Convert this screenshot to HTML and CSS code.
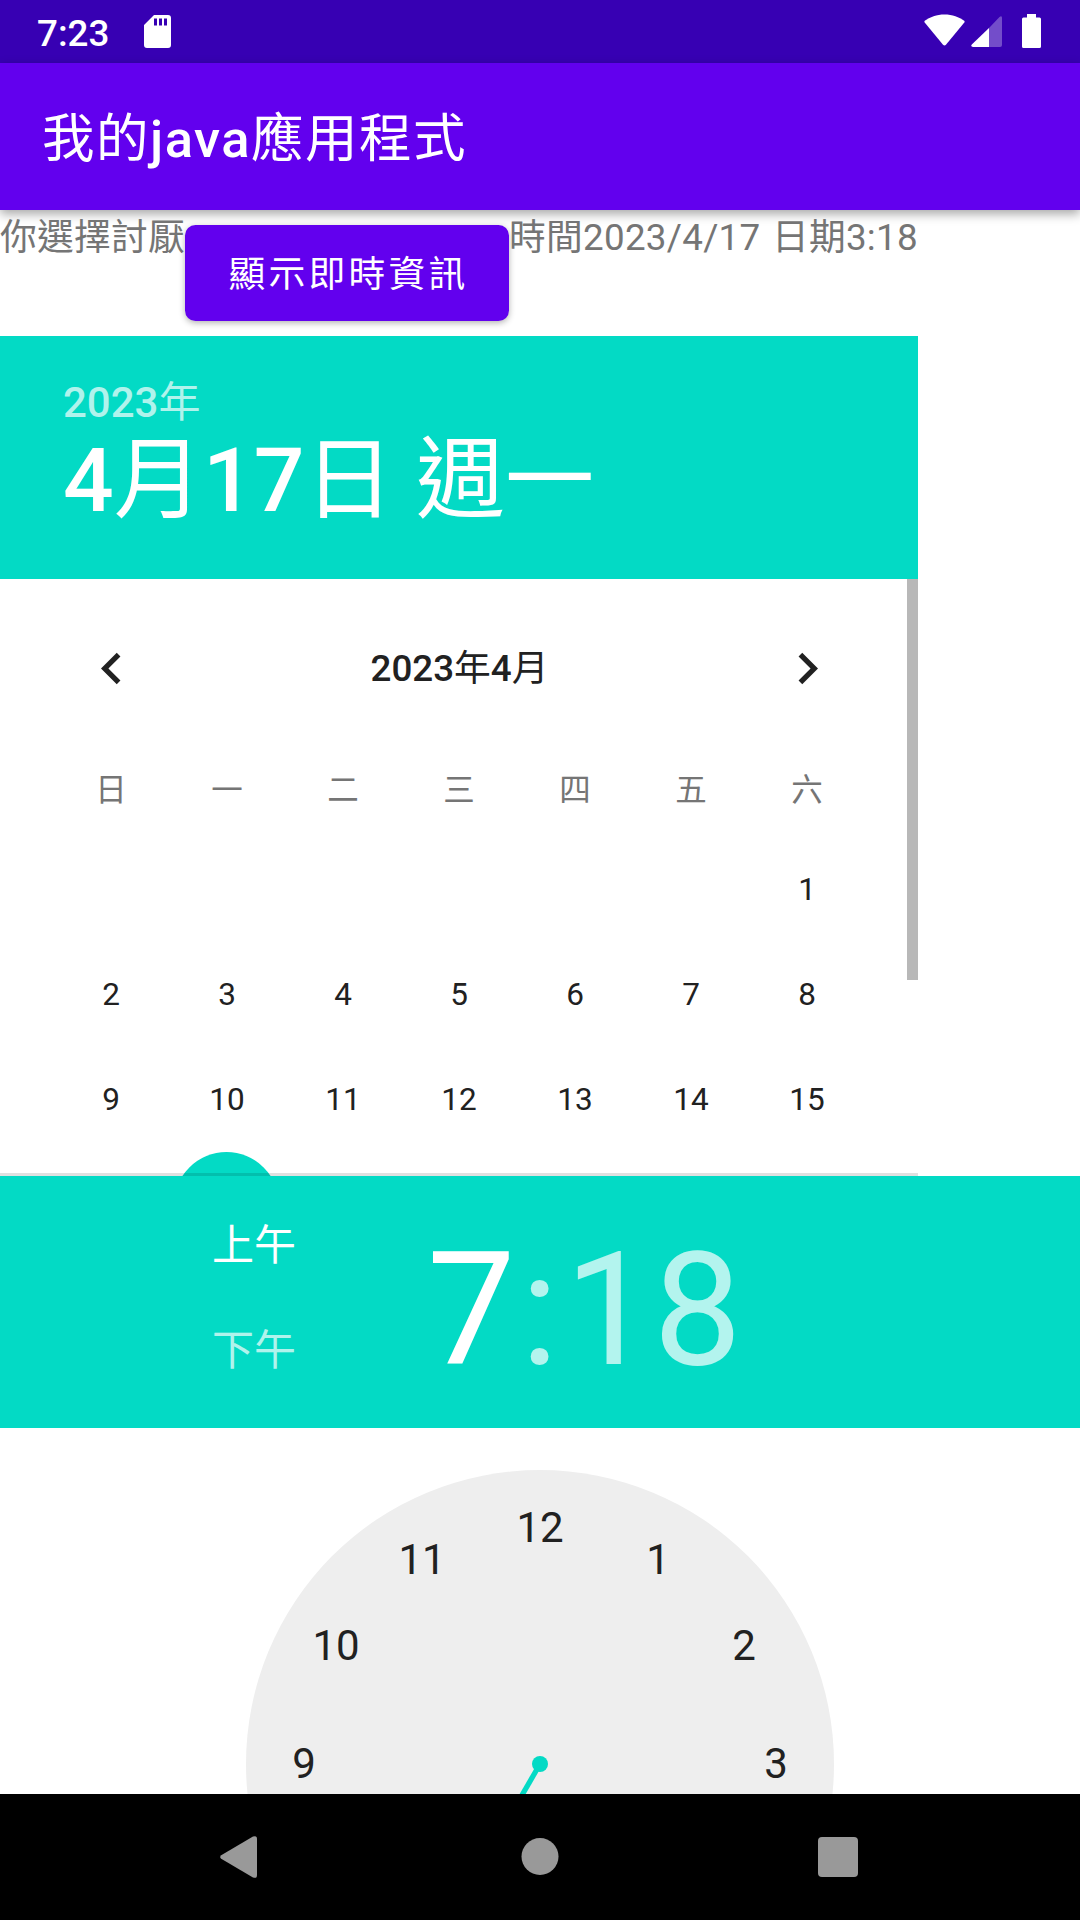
FILE: index.html
```html
<!DOCTYPE html>
<html lang="zh-Hant">
<head>
<meta charset="utf-8">
<title>我的java應用程式</title>
<link rel="stylesheet" href="styles.css">
</head>
<body>
<div class="screen">
  <header class="status-bar">
    <span class="status-time">7:23</span>
    <svg class="icon-sd" viewBox="0 0 27 33" width="27" height="33"><path fill="#fff" fill-rule="evenodd" d="M10 0H24a3 3 0 0 1 3 3V30a3 3 0 0 1-3 3H3a3 3 0 0 1-3-3V10zM10 3.500V10.500h3V3.500zM15 3.500V10.500h3V3.500zM20 3.500V10.500h3V3.500z"/></svg>
    <span class="spacer"></span>
    <svg class="icon-wifi" viewBox="0 0 42 32" width="41" height="32"><path fill="#fff" d="M21 0C13 0 6 2.700 .8 6.500Q0 7.300 .7 8.300L19.500 31Q21 32.600 22.500 31L41.300 8.300Q42 7.300 41.200 6.500C36 2.700 29 0 21 0z"/></svg>
    <svg class="icon-signal" viewBox="0 0 31 31" width="31" height="31"><path fill="#fff" fill-opacity=".3" d="M18 12L28.500 1Q31 -1 31 2V29Q31 31 29 31H18z"/><path fill="#fff" d="M18 12V31H2Q-.8 30.500 .8 28.500z"/></svg>
    <svg class="icon-battery" viewBox="0 0 19 34" width="19" height="34"><path fill="#fff" d="M5 0H14V3.500H17.500Q19 3.500 19 5V32.500Q19 34 17.500 34H1.500Q0 34 0 32.500V5Q0 3.500 1.500 3.500H5z"/></svg>
  </header>

  <div class="app-bar"><h1 class="app-title">我的<b>java</b>應用程式</h1></div>

  <main class="content">
    <div class="info-row">
      <span class="info-text choice">你選擇討厭</span>
      <button class="info-button">顯示即時資訊</button>
      <span class="info-text">時間2023/4/17 日期3:18</span>
    </div>

    <section class="date-picker">
      <div class="date-header">
        <div class="date-year"><b>2023</b>年</div>
        <div class="date-day"><b>4</b>月<b>17</b>日 週一</div>
      </div>
      <div class="calendar">
        <div class="month-bar">
          <svg viewBox="0 0 24 24" width="63" height="63"><path fill="#212121" d="M15.410 7.410L14 6l-6 6 6 6 1.410-1.410L10.830 12z"/></svg>
          <span class="month-title"><b>2023</b>年<b>4</b>月</span>
          <svg viewBox="0 0 24 24" width="63" height="63"><path fill="#212121" d="M10 6L8.590 7.410 13.170 12l-4.580 4.590L10 18l6-6z"/></svg>
        </div>
        <div class="weekdays"><span>日</span><span>一</span><span>二</span><span>三</span><span>四</span><span>五</span><span>六</span></div>
        <div class="days">
          <span class="first">1</span>
          <span>2</span><span>3</span><span>4</span><span>5</span><span>6</span><span>7</span><span>8</span>
          <span>9</span><span>10</span><span>11</span><span>12</span><span>13</span><span>14</span><span>15</span>
          <span class="selected"></span>
        </div>
        <div class="scrollbar"></div>
        <div class="scroll-edge"></div>
      </div>
    </section>

    <section class="time-header">
      <div class="ampm"><span class="on">上午</span><span>下午</span></div>
      <div class="time"><span class="on">7</span><span class="colon">:</span><span>18</span></div>
    </section>

    <section class="clock">
      <svg viewBox="0 0 588 324" width="588" height="324">
        <circle cx="294" cy="294" r="294" fill="#eee"/>
        <g class="clock-numbers">
          <text x="294" y="72">12</text>
          <text x="412" y="104">1</text>
          <text x="498" y="190">2</text>
          <text x="530" y="308">3</text>
          <text x="58" y="308">9</text>
          <text x="90" y="190">10</text>
          <text x="176" y="104">11</text>
        </g>
        <path d="M294 294L259 354.600" stroke="#03dac5" stroke-width="5.250"/>
        <circle cx="294" cy="294" r="8" fill="#03dac5"/>
      </svg>
    </section>
  </main>

  <nav class="nav-bar">
    <svg viewBox="0 0 37 42" width="37" height="42"><path fill="#999" d="M33 .6Q37 -1 37 3V39Q37 43 33 41.400L1.200 22.800Q-.8 21 1.200 19.200z"/></svg>
    <svg class="nav-home" viewBox="0 0 38 38" width="38" height="38"><circle cx="19" cy="18.500" r="18.500" fill="#999"/></svg>
    <svg viewBox="0 0 40 40" width="40" height="40"><rect width="40" height="40" rx="4" fill="#999"/></svg>
  </nav>
</div>
</body>
</html>
```
FILE: styles.css
```css
* { box-sizing: border-box; }
body {
  margin: 0;
  background: #fff;
  font-family: Roboto, "Noto Sans CJK TC", sans-serif;
}
b { font-weight: 500; }
svg { display: block; flex: none; }

.screen {
  width: 1080px;
  height: 1920px;
  display: flex;
  flex-direction: column;
  overflow: hidden;
}

/* Status bar */
.status-bar {
  height: 63px;
  flex: none;
  display: flex;
  align-items: flex-start;
  padding: 0 39px 0 37px;
  background: #3700b3;
  color: #fff;
}
.status-time { width: 107px; font-size: 36.750px; font-weight: 500; line-height: 68px; }
.icon-sd { margin-top: 15px; }
.spacer { flex: 1; }
.icon-wifi { margin: 14px 6px 0 0; }
.icon-signal { margin: 16px 20px 0 0; }
.icon-battery { margin-top: 14px; }

/* App bar */
.app-bar {
  height: 147px;
  flex: none;
  display: flex;
  align-items: center;
  padding: 5px 0 0 42px;
  background: #6200ee;
  color: #fff;
  box-shadow: 0 4px 10px rgba(0, 0, 0, .35);
}
.app-title { margin: 0; font-size: 52.500px; font-weight: 400; line-height: 80px; letter-spacing: 1.500px; }

.content { flex: 1; min-height: 0; }

/* Info row */
.info-row { display: flex; height: 126px; align-items: flex-start; }
.info-text {
  color: #757575;
  font-size: 36.750px;
  line-height: 55px;
  letter-spacing: .28px;
  word-spacing: 2px;
  white-space: nowrap;
}
.choice { width: 185px; }
.info-button {
  flex: none;
  width: 324px;
  height: 96px;
  margin: 15px 0 0;
  padding: 0 0 4px 3px;
  border: 0;
  border-radius: 10.500px;
  background: #6200ee;
  color: #fff;
  font: 400 36.750px Roboto, "Noto Sans CJK TC", sans-serif;
  letter-spacing: 3.280px;
  box-shadow: 0 2px 6px rgba(0, 0, 0, .3);
}

/* Date picker */
.date-picker { width: 918px; }
.date-header { height: 243px; padding: 40px 63px 0; background: #03dac5; color: #fff; }
.date-year { font-size: 42px; line-height: 54px; color: rgba(255, 255, 255, .7); }
.date-day { font-size: 89.250px; line-height: 101px; }
.calendar { position: relative; height: 597px; overflow: hidden; }
.month-bar {
  display: flex;
  justify-content: space-between;
  align-items: center;
  padding: 58px 79px 0 80px;
  color: #212121;
}
.month-title { font-size: 36.750px; line-height: 63px; }
.weekdays, .days {
  display: grid;
  grid-template-columns: repeat(7, 116px);
  padding: 0 53px;
  font-size: 31.500px;
  text-align: center;
}
.weekdays { margin-top: 58px; line-height: 65px; color: #757575; }
.days { margin-top: 14px; grid-auto-rows: 105px; line-height: 105px; color: #212121; }
.first { grid-column: 7; }
.selected {
  grid-column: 2;
  width: 105px;
  height: 105px;
  margin-left: 5px;
  border-radius: 50%;
  background: #03dac5;
}
.scrollbar { position: absolute; top: 0; right: 0; width: 11px; height: 401px; background: #b8b8b8; }
.scroll-edge { position: absolute; left: 0; right: 0; bottom: 0; height: 3px; background: rgba(0, 0, 0, .12); }

/* Time picker */
.time-header {
  height: 252px;
  display: flex;
  padding-left: 212px;
  background: #03dac5;
  color: rgba(255, 255, 255, .7);
}
.ampm { display: flex; flex-direction: column; width: 215px; padding-top: 17px; font-size: 42px; line-height: 105px; }
.time { display: flex; font-size: 157.500px; line-height: 268px; }
.colon { padding: 0 6px 0 5px; }
.on { color: #fff; }
.clock { display: flex; justify-content: center; padding-top: 42px; }
.clock-numbers { font-size: 42px; fill: #212121; text-anchor: middle; }

/* Navigation bar */
.nav-bar {
  height: 126px;
  flex: none;
  display: flex;
  align-items: center;
  justify-content: space-between;
  padding: 0 222px 0 220px;
  background: #000;
}
.nav-home { margin-left: 4px; }
```
